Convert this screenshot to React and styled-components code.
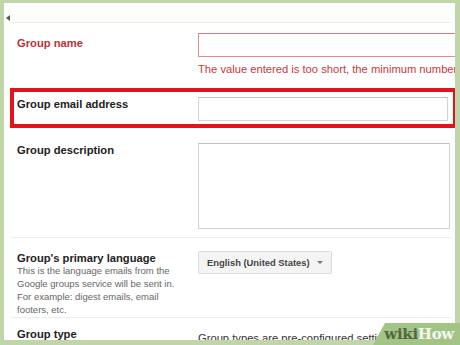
import * as React from "react"
import styled, { createGlobalStyle } from "styled-components"

const GlobalStyle = createGlobalStyle`
  html, body {
    margin: 0;
    padding: 0;
    background: #bfd6aa;
  }
  body {
    font-family: "Liberation Sans", Arial, sans-serif;
  }
`

const Frame = styled.div`
  width: 460px;
  height: 345px;
  box-sizing: border-box;
  padding: 3px 5px 5px 4px;
  background: #bfd6aa;
  position: relative;
  overflow: hidden;
`

const Page = styled.div`
  height: 337px;
  background: #fdfefc;
  overflow: hidden;
  position: relative;
`

const TopBar = styled.div`
  height: 19px;
  display: flex;
  align-items: flex-end;
  padding-left: 2px;
`

const Collapse = styled.span`
  width: 0;
  height: 0;
  border-top: 3px solid transparent;
  border-bottom: 3px solid transparent;
  border-right: 4px solid #555;
  margin-bottom: 1px;
`

const Form = styled.div`
  margin: 0 4px 0 8px;
  background: #fff;
`

const Row = styled.div`
  display: grid;
  grid-template-columns: 181px 1fr;
  align-items: start;
  padding: ${p => p.$pad || "0"};
  padding-left: 5px;
  border-top: ${p => (p.$divider ? "1px solid #ececec" : "none")};
`

const Highlight = styled.div`
  margin: 0 -6px 0 -2px;
  border: 4px solid #e2141b;
  ${Row} {
    padding-left: 3px;
  }
`

const LabelCol = styled.div`
  padding-top: ${p => p.$offset || 0}px;
`

const Label = styled.div`
  font-size: 11.2px;
  line-height: 14px;
  font-weight: bold;
  color: ${p => (p.$error ? "#b8343a" : "#222")};
  white-space: nowrap;
`

const Hint = styled.div`
  font-size: 9.5px;
  line-height: 12.9px;
  color: #666;
  width: 160px;
`

const FieldCol = styled.div`
  min-width: 0;
`

const Input = styled.div`
  box-sizing: border-box;
  height: 24px;
  width: ${p => p.$width || 250}px;
  background: #fff;
  border: 1px solid ${p => (p.$error ? "#dc8e93" : "#d3d3d3")};
  border-top-color: ${p => (p.$error ? "#d57d83" : "#c0c0c0")};
`

const TextArea = styled(Input)`
  height: 86px;
`

const ErrorText = styled.div`
  margin-top: 5px;
  font-size: 11.2px;
  line-height: 14px;
  color: #c13a44;
  white-space: nowrap;
`

const Select = styled.div`
  display: inline-flex;
  align-items: center;
  box-sizing: border-box;
  height: 23px;
  padding: 0 8px 0 8px;
  gap: 7px;
  background: #f4f4f4;
  border: 1px solid #dcdcdc;
  border-radius: 2px;
  font-size: 9.4px;
  font-weight: bold;
  color: #444;
`

const Caret = styled.span`
  width: 0;
  height: 0;
  border-left: 3px solid transparent;
  border-right: 3px solid transparent;
  border-top: 3px solid #777;
`

const Plain = styled.div`
  padding-top: ${p => p.$offset || 0}px;
  font-size: 11.2px;
  line-height: 14px;
  color: #333;
  white-space: nowrap;
`

const Watermark = styled.div`
  position: absolute;
  right: 0;
  bottom: 0;
  width: 87px;
  height: 22px;
  background: #a3c487;
  clip-path: polygon(12px 0, 100% 0, 100% 100%, 0 100%);
  display: flex;
  align-items: center;
  justify-content: flex-end;
  padding-right: 6px;
  box-sizing: border-box;
  font-family: "DejaVu Serif", "Liberation Serif", serif;
  font-weight: bold;
  font-size: 15px;
  letter-spacing: -0.3px;
`

const Wiki = styled.span`
  color: #56663f;
`

const How = styled.span`
  color: #f4f8ef;
`

export default function App() {
  return (
    <>
      <GlobalStyle />
      <Frame>
        <Page>
          <TopBar>
            <Collapse />
          </TopBar>
          <Form>
            <Row $divider $pad="10px 0 12px">
              <LabelCol $offset={3}>
                <Label $error>Group name</Label>
              </LabelCol>
              <FieldCol>
                <Input $error $width={280} />
                <ErrorText>The value entered is too short, the minimum number of characters is 1</ErrorText>
              </FieldCol>
            </Row>
            <Highlight>
              <Row $pad="5px 0 3px">
                <LabelCol $offset={0}>
                  <Label>Group email address</Label>
                </LabelCol>
                <FieldCol>
                  <Input $width={250} />
                </FieldCol>
              </Row>
            </Highlight>
            <Row $pad="15px 0 8px">
              <LabelCol $offset={-2}>
                <Label>Group description</Label>
              </LabelCol>
              <FieldCol>
                <TextArea $width={252} />
              </FieldCol>
            </Row>
            <Row $divider $pad="13px 0 0">
              <LabelCol>
                <Label>Group's primary language</Label>
                <Hint>
                  This is the language emails from the Google groups service will be sent in. For example: digest emails, email footers, etc.
                </Hint>
              </LabelCol>
              <FieldCol>
                <Select>
                  English (United States)
                  <Caret />
                </Select>
              </FieldCol>
            </Row>
            <Row $divider $pad="9px 0 0">
              <LabelCol>
                <Label>Group type</Label>
              </LabelCol>
              <FieldCol>
                <Plain $offset={4}>Group types are pre-configured settings for your group.</Plain>
              </FieldCol>
            </Row>
          </Form>
        </Page>
        <Watermark>
          <Wiki>wiki</Wiki>
          <How>How</How>
        </Watermark>
      </Frame>
    </>
  )
}
